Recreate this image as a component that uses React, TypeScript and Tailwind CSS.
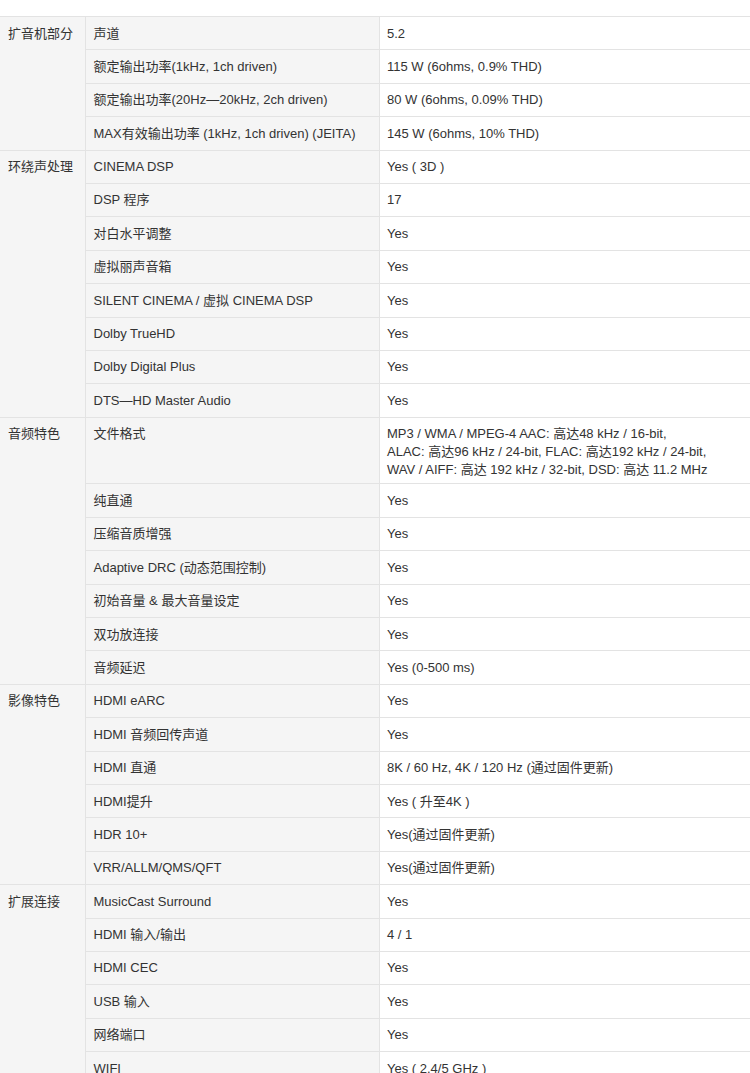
import React from "react";

type Group = { cat: string; rows: [string, React.ReactNode, boolean?][] };

const data: Group[] = [
  {
    cat: "扩音机部分",
    rows: [
      ["声道", "5.2"],
      ["额定输出功率(1kHz, 1ch driven)", "115 W (6ohms, 0.9% THD)"],
      ["额定输出功率(20Hz—20kHz, 2ch driven)", "80 W (6ohms, 0.09% THD)"],
      ["MAX有效输出功率 (1kHz, 1ch driven) (JEITA)", "145 W (6ohms, 10% THD)"],
    ],
  },
  {
    cat: "环绕声处理",
    rows: [
      ["CINEMA DSP", "Yes ( 3D )"],
      ["DSP 程序", "17"],
      ["对白水平调整", "Yes"],
      ["虚拟丽声音箱", "Yes"],
      ["SILENT CINEMA / 虚拟 CINEMA DSP", "Yes"],
      ["Dolby TrueHD", "Yes"],
      ["Dolby Digital Plus", "Yes"],
      ["DTS—HD Master Audio", "Yes"],
    ],
  },
  {
    cat: "音频特色",
    rows: [
      [
        "文件格式",
        <>
          MP3 / WMA / MPEG-4 AAC: 高达48 kHz / 16-bit,
          <br />
          ALAC: 高达96 kHz / 24-bit, FLAC: 高达192 kHz / 24-bit,
          <br />
          WAV / AIFF: 高达 192 kHz / 32-bit, DSD: 高达 11.2 MHz
        </>,
        true,
      ],
      ["纯直通", "Yes"],
      ["压缩音质增强", "Yes"],
      ["Adaptive DRC (动态范围控制)", "Yes"],
      ["初始音量 & 最大音量设定", "Yes"],
      ["双功放连接", "Yes"],
      ["音频延迟", "Yes (0-500 ms)"],
    ],
  },
  {
    cat: "影像特色",
    rows: [
      ["HDMI eARC", "Yes"],
      ["HDMI 音频回传声道", "Yes"],
      ["HDMI 直通", "8K / 60 Hz, 4K / 120 Hz (通过固件更新)"],
      ["HDMI提升", "Yes ( 升至4K )"],
      ["HDR 10+", "Yes(通过固件更新)"],
      ["VRR/ALLM/QMS/QFT", "Yes(通过固件更新)"],
    ],
  },
  {
    cat: "扩展连接",
    rows: [
      ["MusicCast Surround", "Yes"],
      ["HDMI 输入/输出", "4 / 1"],
      ["HDMI CEC", "Yes"],
      ["USB 输入", "Yes"],
      ["网络端口", "Yes"],
      ["WIFI", "Yes ( 2.4/5 GHz )"],
    ],
  },
];

export default function App() {
  return (
    <div
      className="w-[750px] h-[1073px] overflow-hidden bg-white pt-[16px] text-[#333] text-[13px] leading-[18px]"
      style={{ fontFamily: '"Liberation Sans", Arial, "Noto Sans CJK SC", sans-serif' }}
    >
      <table className="w-[750px] border-collapse table-fixed">
        <colgroup>
          <col className="w-[85.5px]" />
          <col className="w-[293.5px]" />
          <col />
        </colgroup>
        <tbody>
          {data.map((g) =>
            g.rows.map((r, i) => (
              <tr key={g.cat + i} className={r[2] ? "h-[66.8px]" : "h-[33.4px]"}>
                {i === 0 && (
                  <td
                    rowSpan={g.rows.length}
                    className="align-top bg-[#f5f5f5] border border-[#e3e3e3] border-l-0 pl-[8px] pt-[7.5px] pr-[4px]"
                  >
                    {g.cat}
                  </td>
                )}
                <td className="align-top bg-[#f5f5f5] border border-[#e3e3e3] pl-[7.5px] pt-[7.5px]">
                  {r[0]}
                </td>
                <td className="align-top bg-white border border-[#e3e3e3] border-r-0 pl-[7.5px] pt-[7.5px]">
                  {r[1]}
                </td>
              </tr>
            ))
          )}
        </tbody>
      </table>
    </div>
  );
}
